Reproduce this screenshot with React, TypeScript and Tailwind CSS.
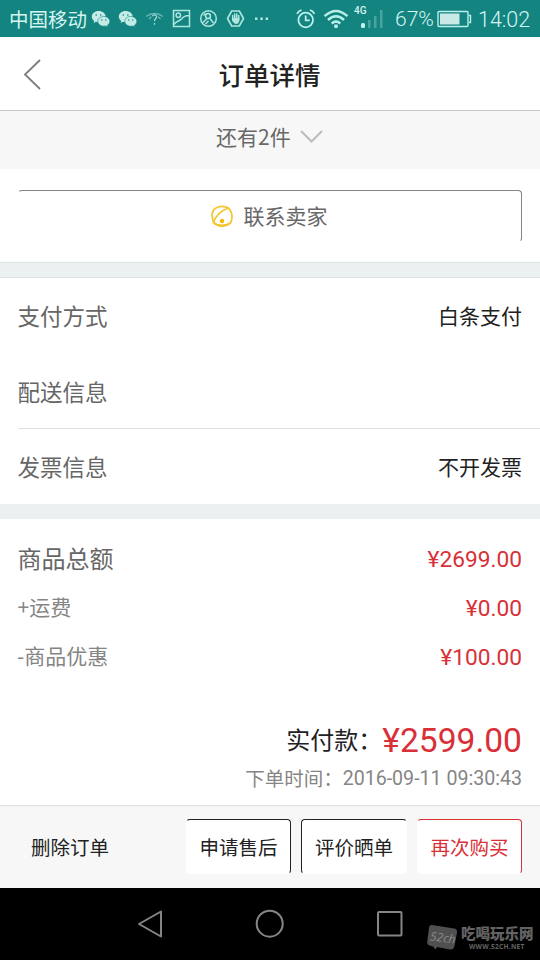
import type { ReactNode } from "react";

const WeChat = () => (
  <svg width="20" height="18" viewBox="0 0 20 18" className="shrink-0">
    <path d="M7.600 1C3.700 1 .8 3.500.8 6.600c0 1.800.9 3.300 2.400 4.300l-.6 2 2.400-1.200c.9.2 1.700.4 2.600.4 3.900 0 7-2.500 7-5.600S11.500 1 7.600 1z" fill="#c5ebe6" />
    <path d="M12.800 6.400c-3.400 0-6 2.200-6 4.900s2.700 4.900 6 4.900c.7 0 1.400-.1 2.100-.3l2 1.100-.5-1.800c1.500-.9 2.400-2.300 2.400-3.900 0-2.700-2.700-4.900-6-4.900z" fill="#c5ebe6" stroke="#148480" strokeWidth=".6" />
    <g fill="#148480"><circle cx="5.200" cy="5" r=".8" /><circle cx="9.800" cy="5" r=".8" /><circle cx="10.800" cy="10" r=".7" /><circle cx="14.800" cy="10" r=".7" /></g>
  </svg>
);

const StatusBar = () => (
  <div className="flex h-[37px] shrink-0 items-center bg-[#148480] pl-[9px] text-[#d5f5f1]">
    <span className="w-[82px] shrink-0 text-[19.5px] leading-[37px]">中国移动</span>
    <WeChat />
    <span className="ml-[7px] flex"><WeChat /></span>
    <svg width="20" height="18" viewBox="0 0 20 18" className="ml-[7px] shrink-0" fill="none" stroke="#68b9b3" strokeWidth="1.3">
      <path d="M1 6.500Q9.500 .5 18 6.500M4 9Q5.500 7.200 6.500 7M15.500 9Q14 7.200 13 7" />
      <path d="M7.300 6.200Q9.500 3.600 11.600 6.200Q12 7.400 10.300 9Q9.500 10 9.500 11.200M9.500 13v1.800" stroke="#a4dad5" />
    </svg>
    <svg width="19" height="19" viewBox="0 0 19 19" className="ml-[7px] shrink-0" fill="none" stroke="#ade5df" strokeWidth="1.500">
      <path d="M1.500 1.500h16v16h-16zM2 15.500C4 11.500 7 13 9.500 10Q12 6.500 17 6.500" />
      <circle cx="6.300" cy="6.300" r="2.200" />
    </svg>
    <svg width="19" height="19" viewBox="0 0 19 19" className="ml-[8px] shrink-0" fill="none" stroke="#ade5df" strokeWidth="1.500">
      <circle cx="9.500" cy="9.500" r="7.800" />
      <circle cx="9" cy="7" r="2.400" />
      <path d="M10.500 9l4 5M4 13.500l4-4M6.500 15l3-3" />
      <path d="M4.500 6.500l2-2" />
    </svg>
    <svg width="19" height="19" viewBox="0 0 19 19" className="ml-[8px] shrink-0" fill="none" stroke="#ade5df" strokeWidth="1.600">
      <path d="M5.700 2h7.600l4.200 7.500-4.200 7.500H5.700L1.500 9.500z" strokeLinejoin="round" />
      <path d="M6.700 6.500v5M8.700 5v6M10.700 5v6M12.700 6.500V11" strokeWidth="1.500" strokeLinecap="round" />
      <path d="M6 9h7.500q0 6-3.500 6-2 0-4-4z" fill="#ade5df" stroke="none" />
    </svg>
    <svg width="16" height="4" viewBox="0 0 16 4" className="ml-[9px] shrink-0" fill="#ade5df">
      <rect x="1" y=".5" width="2.500" height="2.500" /><rect x="6.300" y=".5" width="2.500" height="2.500" /><rect x="11.600" y=".5" width="2.500" height="2.500" />
    </svg>
    <svg width="20" height="20" viewBox="0 0 20 20" className="ml-[26px] shrink-0" fill="none" stroke="#b9f0ea" strokeWidth="1.800">
      <circle cx="9.700" cy="11" r="7.300" />
      <path d="M9.700 6.500v4.800h4M1 4.800Q2.500 2 5.500 1M18.500 4.800Q17 2 14 1" />
    </svg>
    <svg width="26" height="20" viewBox="0 0 26 20" className="ml-[7px] shrink-0" fill="none" stroke="#b9f0ea" strokeWidth="2.400">
      <path d="M1.500 7.200Q13 -3.200 24.500 7.200M5 11Q13 3.500 21 11M8.700 14.500Q13 10.500 17.300 14.500" />
      <circle cx="13" cy="17.200" r="2" fill="#b9f0ea" stroke="none" />
    </svg>
    <div className="ml-[5px] flex h-[27px] w-[33px] shrink-0 flex-col">
      <span className="h-[5px] font-[Roboto] text-[10px] font-medium leading-[12px]">4G</span>
      <svg width="30" height="20" viewBox="0 0 30 20" className="shrink-0">
        <rect x="7" y="13" width="4" height="5" rx="1.500" fill="#c5f0eb" />
        <g fill="#49a39e"><rect x="14" y="10" width="2.500" height="8" /><rect x="20" y="6" width="2.500" height="12" /><rect x="26" y="0" width="2.500" height="18" /></g>
      </svg>
    </div>
    <span className="ml-[8px] w-[42px] shrink-0 pt-[2px] font-[Roboto] text-[21px] font-light leading-[37px]">67%</span>
    <svg width="35" height="18" viewBox="0 0 35 18" className="shrink-0" fill="none" stroke="#b9f0ea" strokeWidth="1.400">
      <rect x="1" y="1.500" width="30" height="15" rx="1" />
      <path d="M32 5.500h1.500v7H32" /><rect x="3" y="3.500" width="19.500" height="11" fill="#c8e9e5" stroke="none" />
    </svg>
    <span className="ml-[6px] shrink-0 pt-[2px] font-[Roboto] text-[21.500px] font-light leading-[37px]">14:02</span>
  </div>
);

const InfoRow = ({ label, value }: { label: string; value?: string }) => (
  <div className="flex h-[75px] items-center justify-between pr-[18px]">
    <span className="-ml-[0.5px] text-[22.5px] text-[#666]">{label}</span>
    <span className="text-[21px] text-[#222]">{value}</span>
  </div>
);

const PriceRow = ({ children, price }: { children: ReactNode; price: string }) => (
  <div className="flex h-[49px] items-center justify-between">
    {children}
    <span className="pt-[3px] font-[Roboto] text-[22.7px] text-[#d93038]">{price}</span>
  </div>
);

export default function App() {
  return (
    <div className="flex h-[960px] w-[540px] flex-col overflow-hidden bg-white font-['Noto_Sans_CJK_SC',sans-serif] leading-none">
      <StatusBar />
      <header className="flex h-[74px] shrink-0 items-center border-b border-[#c8c8c8] pl-[23px]">
        <svg width="20" height="32" viewBox="0 0 20 32" fill="none" stroke="#7d7d7d" strokeWidth="1.800"><path d="M17 2L2 16.500 17 31" /></svg>
        <h1 className="ml-[175.500px] text-[25.500px] font-medium text-[#222]">订单详情</h1>
      </header>
      <div className="flex h-[58px] shrink-0 items-center bg-[#f7f7f7] pb-[8px] pl-[216px] text-[21px] text-[#686868]">
        还有2件
        <svg width="24" height="15" viewBox="0 0 24 15" className="ml-[9px]" fill="none" stroke="#bdbdbd" strokeWidth="2"><path d="M1 2l10.500 10.500L22 2" /></svg>
      </div>
      <div className="h-[93px] shrink-0 px-[18px] pt-[21px]">
        <div className="flex h-[52px] items-center rounded-[4px] border border-b-transparent border-l-transparent border-r-[#858585] border-t-[#858585] pl-[192px] text-[21px] text-[#686868]">
          <svg width="23" height="23" viewBox="0 0 23 23" fill="none" stroke="#f5c52c" strokeWidth="1.700">
            <path d="M5 3Q11-.2 17.500 3Q23.500 10 19.500 18Q12 24 4 19Q-1 12 2.500 5" />
            <path d="M17.500 3Q7 6.500 2 17.500M2 17.500Q10 23 19.500 18M2.500 5l2.500-2" />
            <circle cx="11" cy="16" r="2.200" fill="#f5b800" stroke="none" />
          </svg>
          <span className="ml-[9.500px] pb-[2px]">联系卖家</span>
        </div>
      </div>
      <div className="h-[16px] shrink-0 border-y border-[#dce1e1] bg-[#ebf0f0]" />
      <section className="h-[226px] shrink-0 pl-[18px]">
        <InfoRow label="支付方式" value="白条支付" />
        <div className="border-b border-[#dedede] pt-px [&>div]:h-[74px]"><InfoRow label="配送信息" /></div>
        <InfoRow label="发票信息" value="不开发票" />
      </section>
      <div className="h-[15px] shrink-0 bg-[#ebf0f0]" />
      <section className="flex h-[286px] shrink-0 flex-col px-[18px] pt-[15px]">
        <PriceRow price="¥2699.00"><span className="-ml-[0.5px] pb-[2px] text-[24px] text-[#666]">商品总额</span></PriceRow>
        <PriceRow price="¥0.00"><span className="-ml-[0.5px] pb-[3px] text-[21px] text-[#858585]">+运费</span></PriceRow>
        <PriceRow price="¥100.00"><span className="-ml-[1px] pb-[3px] text-[21px] text-[#858585]">-商品优惠</span></PriceRow>
        <div className="mt-[38px] flex h-[42px] items-center justify-end">
          <span className="pb-[2px] text-[24px] text-[#222]">实付款：</span>
          <span className="pt-[1px] font-[Roboto] text-[33.600px] text-[#d93038]">¥2599.00</span>
        </div>
        <div className="flex h-[34px] items-center justify-end text-[19.500px] text-[#858585]">
          <span>下单时间：</span><span className="pt-[1px] font-[Roboto] text-[19.600px]">2016-09-11 09:30:43</span>
        </div>
      </section>
      <footer className="flex h-[83px] shrink-0 items-start border-t border-[#dedede] bg-[#f7f7f7] pl-[31px] pt-[13px] text-[19.500px] text-[#222]">
        <span className="w-[155px] leading-[55px]">删除订单</span>
        <button className="h-[55px] w-[105px] rounded-[4px] border border-b-transparent border-l-transparent border-r-[#222] border-t-[#222] bg-white">申请售后</button>
        <button className="ml-[10px] h-[55px] w-[106px] rounded-[4px] border border-b-transparent border-l-[#222] border-r-transparent border-t-[#222] bg-white">评价晒单</button>
        <button className="ml-[10px] h-[55px] w-[105px] rounded-[4px] border border-b-transparent border-l-transparent border-r-[#d93038] border-t-[#d93038] bg-white text-[#d93038]">再次购买</button>
      </footer>
      <nav className="flex h-[72px] shrink-0 items-center bg-black pl-[137px]">
        <svg width="26" height="28" viewBox="0 0 26 28" fill="none" stroke="#858585" strokeWidth="2" strokeLinejoin="round"><path d="M24 1.500v25L2 14z" /></svg>
        <svg width="30" height="30" viewBox="0 0 30 30" className="ml-[92px]" fill="none" stroke="#858585" strokeWidth="2"><circle cx="14.700" cy="14.700" r="13" /></svg>
        <svg width="26" height="26" viewBox="0 0 26 26" className="ml-[92px]" fill="none" stroke="#858585" strokeWidth="2"><rect x="1" y="1" width="23.500" height="23.500" rx="1" /></svg>
        <div className="ml-[24px] mt-[27px] flex items-center text-[#636363]">
          <div className="relative flex h-[25px] w-[31px] items-center justify-center">
            <svg width="31" height="26" viewBox="0 0 31 26" className="absolute inset-0" fill="#505050"><path d="M5 0L27 3.500Q30.500 4 30 7.500L27.500 21Q26.500 25 23 24.500L10 22 8.500 24.500 6 21.500 2.500 20.500Q-.3 19.500.2 16.500L2 3Q2.500-.3 5 0z" /></svg>
            <span className="relative rotate-[8deg] font-['Open_Sans'] text-[12px] italic text-[#8b8b8b]">52ch</span>
          </div>
          <div className="ml-[3px] flex flex-col">
            <span className="text-[14.500px] font-black leading-[14px]">吃喝玩乐网</span>
            <span className="ml-[8px] mt-[4px] font-['Open_Sans'] text-[6.600px] font-bold leading-[6px] tracking-[0.25px]">WWW.52CH.NET</span>
          </div>
        </div>
      </nav>
    </div>
  );
}
